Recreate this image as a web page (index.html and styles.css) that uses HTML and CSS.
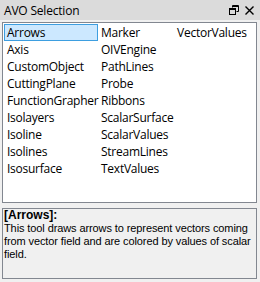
FILE: index.html
```html
<!DOCTYPE html>
<html lang="en">
<head>
    <meta charset="UTF-8">
    <title>AVO Selection</title>
    <link rel="stylesheet" href="styles.css">
</head>
<body>
    <div class="panel">
        <div class="titlebar">
            <span class="title">AVO Selection</span>
            <div class="buttons">
                <svg width="10" height="10" viewBox="0 0 10 10">
                    <path d="M3.5 0.5h6v6h-2M3.5 0.5v2M3.5 1.5h6" fill="none" stroke="#000"/>
                    <rect x="0.5" y="3.5" width="6" height="6" fill="none" stroke="#000"/>
                    <path d="M0.5 4.5h6" stroke="#000"/>
                </svg>
                <svg width="9" height="9" viewBox="0 0 9 9">
                    <path d="M0.5 0.5l8 8M8.5 0.5l-8 8" stroke="#000" stroke-width="1.4"/>
                </svg>
            </div>
        </div>

        <div class="list">
            <div class="column first">
                <div class="item selected">Arrows</div>
                <div class="item">Axis</div>
                <div class="item">CustomObject</div>
                <div class="item">CuttingPlane</div>
                <div class="item">FunctionGrapher</div>
                <div class="item">Isolayers</div>
                <div class="item">Isoline</div>
                <div class="item">Isolines</div>
                <div class="item">Isosurface</div>
            </div>
            <div class="column second">
                <div class="item">Marker</div>
                <div class="item">OIVEngine</div>
                <div class="item">PathLines</div>
                <div class="item">Probe</div>
                <div class="item">Ribbons</div>
                <div class="item">ScalarSurface</div>
                <div class="item">ScalarValues</div>
                <div class="item">StreamLines</div>
                <div class="item">TextValues</div>
            </div>
            <div class="column">
                <div class="item">VectorValues</div>
            </div>
        </div>

        <div class="description">
            <div class="desc-title">[Arrows]:</div>
            <p>This tool draws arrows to represent vectors coming from vector field and are colored by values of scalar field.</p>
        </div>
    </div>
</body>
</html>
```
FILE: styles.css
```css
* {
    margin: 0;
    padding: 0;
    box-sizing: border-box;
}

body {
    background-color: #f0f0f0;
    font-family: 'Open Sans', sans-serif;
    color: #000;
}

.panel {
    width: 260px;
    height: 282px;
}

.titlebar {
    height: 20px;
    background-color: #dbdbdb;
    display: flex;
    align-items: center;
    justify-content: space-between;
    padding: 0 6px 0 4px;
    font-size: 12px;
}

.title {
    letter-spacing: -0.2px;
}

.buttons {
    display: flex;
    align-items: center;
    gap: 6px;
}

.buttons svg {
    display: block;
}

.list {
    margin: 2px 3px 0 2px;
    height: 181px;
    border: 1px solid #828790;
    background-color: #fff;
    padding: 1px;
    display: flex;
    font-size: 12px;
    letter-spacing: -0.25px;
}

.column.first {
    width: 94px;
}

.column.second {
    width: 76px;
}

.item {
    height: 17px;
    line-height: 15px;
    padding: 0 2px;
    border: 1px solid transparent;
    white-space: nowrap;
}

.item.selected {
    background-color: #cce8ff;
    border-color: #3d9ee0;
}

.description {
    margin: 5px 3px 0 2px;
    height: 71px;
    border: 1px solid #828790;
    padding: 0 0 0 1px;
    font-family: 'Liberation Sans', sans-serif;
    font-size: 11px;
    line-height: 13px;
    letter-spacing: -0.1px;
}

.desc-title {
    font-weight: bold;
    font-size: 12px;
    letter-spacing: 0;
}
```
